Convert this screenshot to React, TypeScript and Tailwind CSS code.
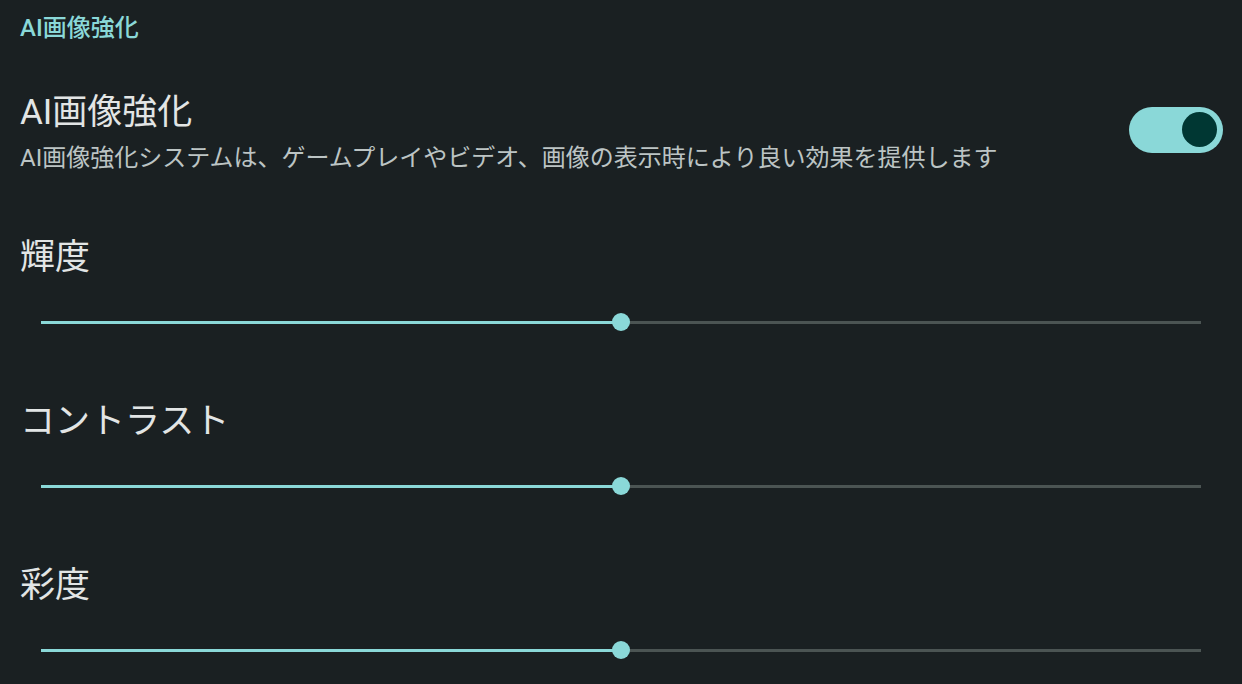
import React, { useState } from "react"

const font = { fontFamily: '"Roboto", "Noto Sans CJK JP", sans-serif' }

const Toggle = ({ on, onChange }: { on: boolean; onChange: () => void }) => (
	<button
		onClick={onChange}
		className={`flex items-center w-[94px] h-[46px] rounded-full px-[6px] shrink-0 ${
			on ? "bg-[#8ad8d8] justify-end" : "bg-[#3a4446] justify-start"
		}`}
	>
		<span className="block w-[35px] h-[35px] rounded-full bg-[#003733]" />
	</button>
)

const Slider = ({ value }: { value: number }) => (
	<div className="relative h-[40px] mx-[21px] flex items-center">
		<div className="flex w-full h-[3px]">
			<div className="h-full bg-[#8ad8d8]" style={{ width: `${value}%` }} />
			<div className="h-full flex-1 bg-[#4b5453]" />
		</div>
		<div
			className="absolute top-1/2 w-[18px] h-[18px] -ml-[9px] -mt-[9px] rounded-full bg-[#8ad8d8]"
			style={{ left: `${value}%` }}
		/>
	</div>
)

const sliders = [
	{ label: "輝度", value: 50, gap: "mt-[62px]", inner: "mt-[22px]" },
	{ label: "コントラスト", value: 50, gap: "mt-[58px]", inner: "mt-[22px]" },
	{ label: "彩度", value: 50, gap: "mt-[58px]", inner: "mt-[22px]" },
]

export default function App() {
	const [enabled, setEnabled] = useState(true)

	return (
		<div className="w-[1242px] h-[684px] bg-[#1a2022] overflow-hidden px-[20px]" style={font}>
			{/* Section header */}
			<div className="h-[56px] flex items-center text-[24px] font-medium text-[#8ad8d8]">
				AI画像強化
			</div>

			{/* Toggle row */}
			<div className="mt-[35px] flex items-center justify-between">
				<div>
					<div className="text-[35px] leading-[44px] text-[#e2e5e5]">AI画像強化</div>
					<div className="mt-[7px] text-[24px] leading-[32px] text-[#bcc4c4]">
						AI画像強化システムは、ゲームプレイやビデオ、画像の表示時により良い効果を提供します
					</div>
				</div>
				<div className="-mt-[6px] mr-[-1px]">
					<Toggle on={enabled} onChange={() => setEnabled(!enabled)} />
				</div>
			</div>

			{/* Sliders */}
			{sliders.map((s) => (
				<div key={s.label} className={s.gap}>
					<div className="text-[35px] leading-[44px] text-[#e2e5e5]">{s.label}</div>
					<div className={s.inner}>
						<Slider value={s.value} />
					</div>
				</div>
			))}
		</div>
	)
}
